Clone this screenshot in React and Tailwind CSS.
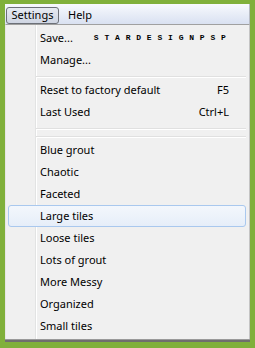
import React from "react";

const font = { fontFamily: '"Noto Sans", "Liberation Sans", Arial, sans-serif' };

function Item({ label, shortcut, extra }) {
  return (
    <div className="relative z-10 flex h-[22px] items-center pl-[34px] pr-[20px] text-[11px] text-black">
      <span>{label}</span>
      {extra}
      {shortcut && <span className="ml-auto">{shortcut}</span>}
    </div>
  );
}

function Sep() {
  return (
    <div className="relative z-10 h-[8px] pl-[30px] pr-[3px] pt-[5px]">
      <div className="h-[1px] bg-[#e0e0e0]" />
      <div className="h-[1px] bg-white" />
    </div>
  );
}

function Hover({ label }) {
  return (
    <div className="relative z-10 flex h-[22px] items-stretch pl-[2px] pr-[3px]">
      <div className="flex flex-1 items-center rounded-[3px] border border-[#a9c8ee] bg-gradient-to-b from-[#f3f7fc] to-[#e6eef9] pl-[31px] text-[11px] text-black">
        {label}
      </div>
    </div>
  );
}

export default function App() {
  return (
    <div className="h-[348px] w-[255px] bg-[#80b03b] px-[5px] pt-[4px]" style={font}>
      <div className="flex h-[20px] items-start border-r border-[#b8bcc4] bg-gradient-to-b from-[#f7f9fd] to-[#d9e1f1] pl-[1px]">
        <div className="mt-[3px] flex h-[17px] w-[53px] items-center justify-center rounded-[3px] border border-[#6c7078] bg-gradient-to-b from-[#e6eaf2] to-[#cfd5e2] text-[11px] text-black">
          Settings
        </div>
        <div className="ml-[9px] mt-[2px] text-[11px] leading-[18px] text-black">Help</div>
      </div>
      <div className="relative border-l border-r border-t border-l-[#e6e6e6] border-r-[#c4c4c4] border-t-[#a0a0a0] bg-[#f0f0f0] pb-[2px] pt-[2px]">
        <div className="absolute bottom-0 left-[29px] top-0 w-[1px] bg-[#e2e3e3]" />
        <div className="absolute bottom-0 left-[30px] top-0 w-[1px] bg-white" />
        <Item
          label="Save..."
          extra={
            <span
              className="ml-[21px] text-[8px] font-bold tracking-[5.8px] text-black"
              style={{ fontFamily: '"Liberation Mono", monospace' }}
            >
              STARDESIGNPSP
            </span>
          }
        />
        <Item label="Manage..." />
        <Sep />
        <Item label="Reset to factory default" shortcut="F5" />
        <Item label="Last Used" shortcut="Ctrl+L" />
        <Sep />
        <Sep />
        <Item label="Blue grout" />
        <Item label="Chaotic" />
        <Item label="Faceted" />
        <Hover label="Large tiles" />
        <Item label="Loose tiles" />
        <Item label="Lots of grout" />
        <Item label="More Messy" />
        <Item label="Organized" />
        <Item label="Small tiles" />
      </div>
      <div className="h-[1px] bg-[#9a9a9a]" />
      <div className="h-[2px] bg-[#6f6f6f]" />
    </div>
  );
}
